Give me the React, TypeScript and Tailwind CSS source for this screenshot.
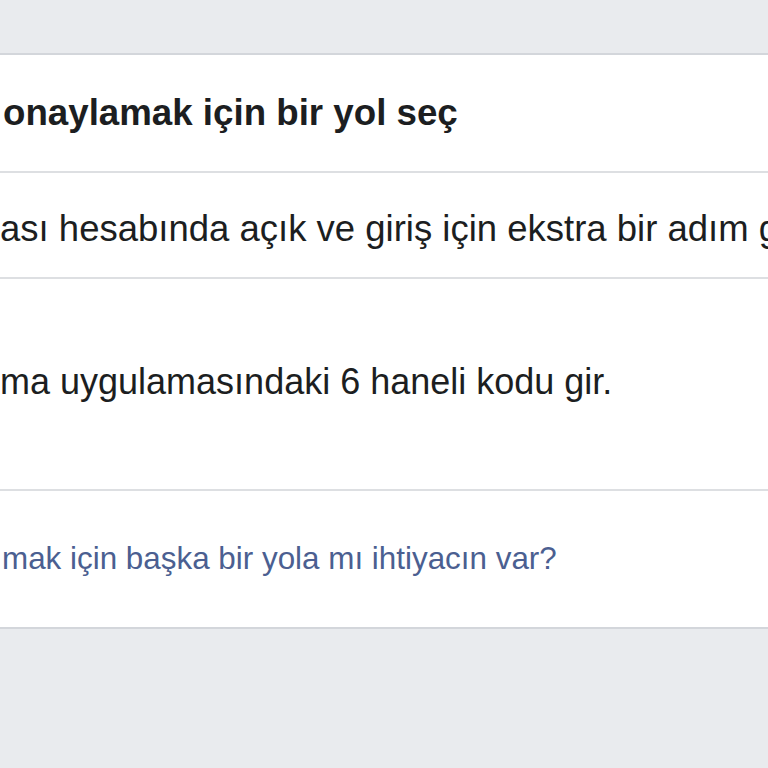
export default function App() {
  return (
    <div className="min-h-[768px] w-[768px] overflow-hidden bg-[#e9ebee] pt-[53px] font-['Liberation_Sans',Arial,sans-serif]">
      <div className="border-y-2 border-[#d3d6db] bg-white">
        <div className="flex h-[116px] items-center whitespace-nowrap pl-[3px] text-[36.7px] font-bold text-[#1c1e21]">
          onaylamak için bir yol seç
        </div>
        <div className="flex h-[106px] items-center overflow-hidden whitespace-nowrap border-t-2 border-[#dddfe2] pt-[8px] text-[36.5px] text-[#1c1e21]">
          ası hesabında açık ve giriş için ekstra bir adım gerektiriyor.
        </div>
        <div className="flex h-[212px] items-center overflow-hidden whitespace-nowrap border-t-2 border-[#dddfe2] pb-[4px] text-[36px] text-[#1c1e21]">
          ma uygulamasındaki 6 haneli kodu gir.
        </div>
        <div className="flex h-[138px] items-center overflow-hidden whitespace-nowrap border-t-2 border-[#dddfe2] pl-[2px] text-[31.4px] text-[#4b5f91]">
          mak için başka bir yola mı ihtiyacın var?
        </div>
      </div>
    </div>
  );
}
